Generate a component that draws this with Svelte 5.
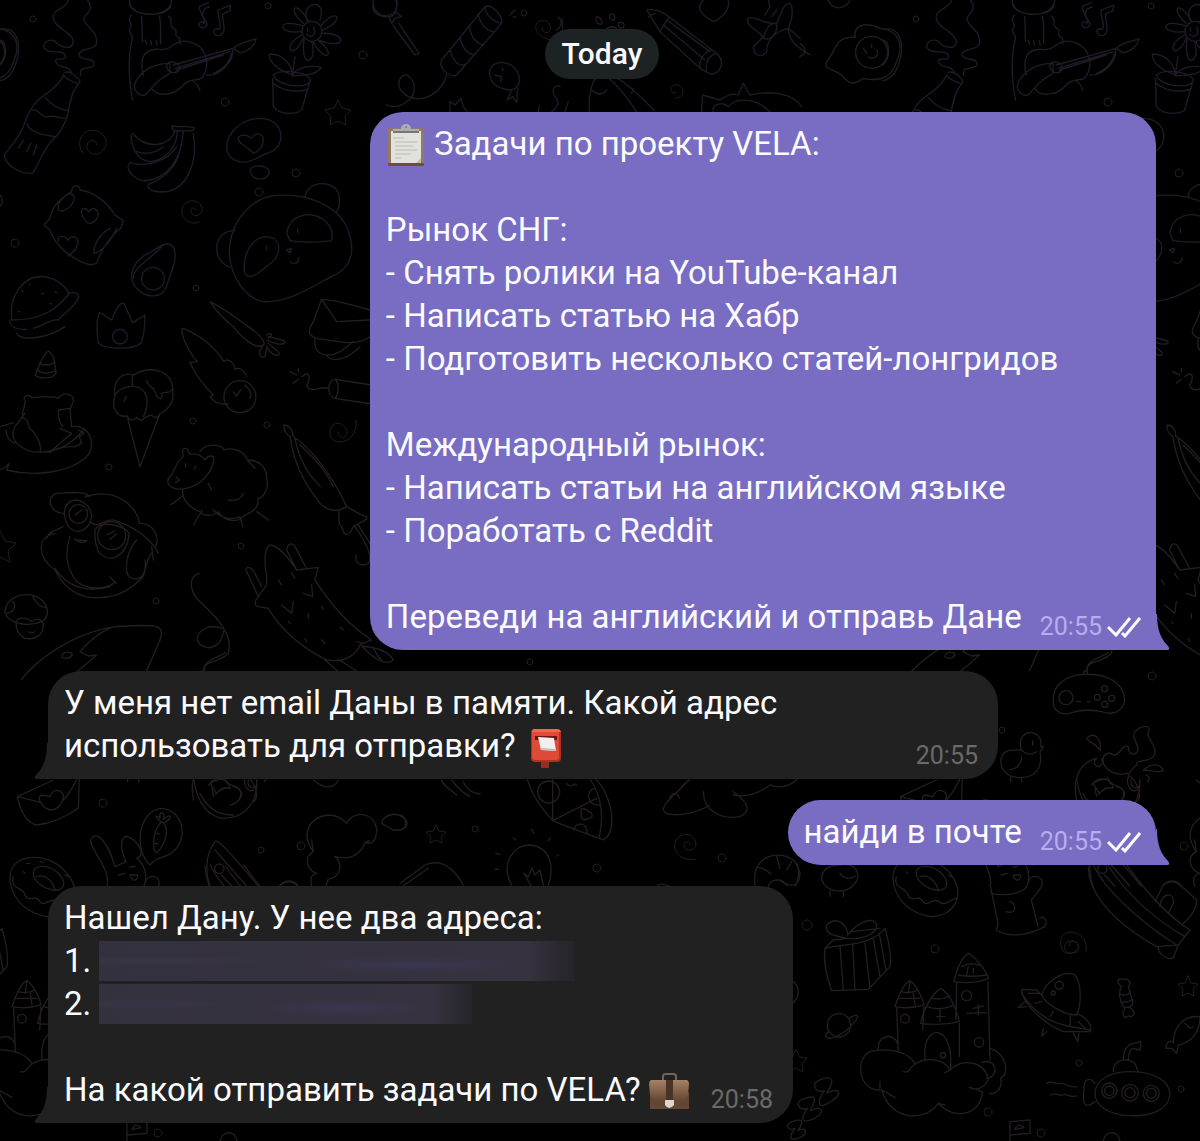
<script lang="ts">
	const tileWidth = 883;
	const tileOffsets = [-tileWidth, 0, tileWidth];

	// small circles scattered between the doodles: x, y, radius
	const dots = [
		[33, 19, 3], [268, 6, 3], [363, 55, 4], [225, 102, 4], [296, 173, 4], [259, 192, 4],
		[15, 243, 4], [196, 288, 3], [193, 421, 3], [267, 425, 3], [109, 467, 3], [241, 546, 3],
		[156, 601, 3], [269, 676, 4], [119, 730, 3], [103, 803, 4], [261, 850, 3], [301, 846, 4],
		[475, 829, 3], [597, 868, 4], [722, 858, 4], [807, 925, 5], [52, 949, 4], [196, 1063, 3],
		[298, 1089, 3], [105, 1112, 4], [158, 1133, 4], [524, 13, 3], [530, 662, 3]
	];

	const spirals = [
		'M83 153 C77 146 79 134 88 131 C100 127 111 140 104 149 C98 158 85 154 87 145 C89 138 97 140 97 145',
		'M199 222 C190 226 181 219 182 210 C183 200 195 198 201 205 C206 215 193 219 191 212 C190 207 195 207 196 210',
		'M340 442 C332 443 327 434 332 426 C337 420 347 425 347 433 C346 440 338 438 338 432 M356 420 C358 432 350 442 340 442',
		'M552 40 C539 38 533 29 537 23 C543 17 553 23 550 30 C547 36 540 31 543 27 M562 18 C565 30 560 38 552 40',
		'M675 98 C685 98 685 87 678 85 C669 84 669 94 676 93',
		'M695 859 C683 862 673 853 675 843 C678 831 694 832 696 843 C696 852 684 852 684 845 C684 840 690 842 690 844',
		'M192 952 C182 957 179 945 184 942 C195 937 201 951 191 953 M180 951 C174 940 180 932 188 932 C199 933 205 942 203 951 M180 951 C188 957 196 951 195 945 C192 939 185 940 187 946'
	];

	const stars = [
		[338, 114, 14], [0, 548, 17], [436, 835, 10], [796, 1062, 12], [305, 987, 11]
	];

	function starPoints(cx: number, cy: number, r: number) {
		const points: string[] = [];
		for (let i = 0; i < 10; i++) {
			const radius = i % 2 ? r / 2 : r;
			const angle = (i * Math.PI) / 5 - Math.PI / 2;
			points.push(`${Math.round(cx + radius * Math.cos(angle))},${Math.round(cy + radius * Math.sin(angle))}`);
		}
		return points.join(' ');
	}
</script>

{#snippet meta(time: string, sent: boolean)}
	<span class="meta">
		<time>{time}</time>
		{#if sent}
			<svg class="checks" viewBox="0 0 34 22" role="img" aria-label="Read">
				<path d="M1 11 L9 19 L23 2 M15 17 L18 20 L33 2" />
			</svg>
		{/if}
	</span>
{/snippet}

{#snippet tail()}
	<svg class="tail" viewBox="0 0 16 36" aria-hidden="true">
		<path d="M0 0 H1 C1 16 5 25 12 32 Q15 36 11 36 H0 Z" />
	</svg>
{/snippet}

<main class="chat">
	<svg class="wallpaper" aria-hidden="true">
		<defs>
			<g id="doodles">
				{#each dots as [x, y, r]}
					<circle cx={x} cy={y} {r} />
				{/each}
				{#each spirals as d}
					<path {d} />
				{/each}
				{#each stars as [x, y, r]}
					<polygon points={starPoints(x, y, r)} />
				{/each}

				<!-- bottle, guitar player, flower pot, bananas, pillow, panda, avocado -->
				<g class="violet" transform="scale(.3333)">
					<path d="M205 0 C205 25 155 25 160 55 C163 85 218 95 220 125 C218 155 175 140 165 123 C145 115 125 130 133 145 C145 165 195 145 197 170 C190 185 165 170 167 185 C175 210 205 190 215 220 M262 0 C290 35 245 45 252 60 C265 90 290 90 290 125 C290 155 240 140 236 165 C245 185 285 170 282 195 C275 210 235 195 242 225" />
					<path d="M195 218 C205 210 235 230 240 245 L228 262 C215 280 210 305 203 345 C190 385 175 405 160 418 C130 445 118 490 98 520 C60 522 20 500 12 465 C40 430 55 415 68 385 C82 345 95 315 125 292 C155 270 182 250 190 225 M190 225 C200 240 215 245 232 250 M135 292 C155 315 180 328 203 332 M98 330 C115 325 125 355 145 350 C165 345 180 355 195 355 M80 370 C90 400 130 405 165 410 M70 420 C62 435 58 440 55 445 M92 430 L80 455 M110 435 L100 465" />
					<path d="M388 0 C388 60 515 55 515 0 M388 12 C400 55 510 50 513 15 M395 45 C375 65 405 70 390 85 C380 100 405 100 395 125 C385 170 385 240 398 300 M425 50 C428 80 425 100 428 125 M478 48 C485 75 480 110 482 130 M505 48 C525 60 500 75 522 85 C540 95 515 105 535 112 C545 120 535 128 542 132 M435 120 L440 132 M452 122 L455 135 M468 122 L472 135" />
					<path d="M430 225 C418 180 430 145 475 148 C520 155 520 115 565 125 C620 135 630 190 612 225 C600 250 570 230 550 255 C520 290 470 290 455 265 M510 190 C470 190 430 205 410 240 C390 270 420 290 435 285 C455 270 460 245 510 220 Z M500 195 C510 175 540 190 538 205 C535 225 500 222 500 195 M520 195 L700 145 M525 205 L690 155 M530 210 L670 165 M700 145 C720 125 745 125 768 117 C765 135 745 155 720 158 Z M620 225 C655 230 700 190 698 150 M640 220 C670 210 690 185 695 160 M580 245 C590 245 595 260 600 272" />
					<path d="M600 80 C590 70 605 60 612 70 C620 55 590 30 600 18 L625 8 M600 80 C615 90 625 75 618 65 C605 45 605 40 612 28 L628 20 M648 105 C635 95 645 82 658 88 C668 75 650 45 655 30 L692 16 L690 32 L668 42 C665 60 680 85 668 100 C662 108 655 108 648 105" />
					<circle cx="936" cy="94" r="30" />
					<path d="M923 64 C895 5 985 -10 960 60 M965 75 C1010 20 1040 60 967 90 M967 100 C1040 95 1045 155 955 120 M955 122 C1010 160 980 195 940 128 M935 125 C955 190 900 210 912 120 M910 115 C880 185 840 140 905 105 M905 95 C830 105 830 50 908 78 M910 70 C865 35 880 -10 925 62 M923 84 V94 M942 80 V90 M920 102 C930 118 945 105 945 92" />
					<path d="M885 170 L877 225 M877 225 C875 190 845 160 808 163 C808 190 835 210 877 225 C895 200 930 195 964 202 C950 225 915 225 877 228 M820 225 C845 205 920 215 932 240 C925 270 830 260 820 225 M818 235 L820 320 C840 345 885 345 905 330 L928 250 M820 250 C850 275 900 280 925 265" />
					<path d="M515 378 C535 382 560 378 583 382 C585 400 540 390 520 392 Z M525 392 C510 440 440 450 400 402 C385 395 395 480 450 485 C500 480 530 440 532 395 M530 440 C500 490 430 500 390 488 C370 510 410 545 440 542 C500 535 545 480 550 395 M540 450 C530 510 480 540 445 553 C440 575 480 580 510 573 C565 555 595 480 580 400 M410 455 C440 465 465 460 490 440" />
					<path d="M690 470 C660 430 705 355 785 355 C850 360 860 430 815 455 C775 465 740 510 690 470 M760 460 C745 440 710 430 715 412 C730 400 742 405 755 415 C765 395 785 400 790 415 C792 440 775 455 760 460 M750 510 C760 490 810 495 808 520 C800 545 755 545 750 510" />
					<path d="M215 575 C215 555 240 550 240 570 C280 575 320 605 345 645 L370 662 L362 685 C335 705 305 745 290 790 L270 795 C220 780 165 740 150 690 L132 675 L150 655 C155 615 190 590 215 575 M175 615 C185 590 215 570 222 590 C222 620 190 640 175 630 Z M265 670 C245 655 235 625 255 625 L268 635 C275 615 300 630 293 650 C290 665 275 670 265 670 M175 725 C170 705 195 705 203 720 C220 700 240 715 232 735 C225 755 215 760 205 768 M330 685 C300 700 280 735 282 760 C310 755 340 710 350 685" />
					<path d="M805 590 C890 575 1000 600 1040 680 C1070 750 1055 800 1005 825 C950 850 870 910 790 905 C720 890 680 800 690 730 C700 660 750 605 805 590 M915 592 C920 540 1010 535 1018 590 C1020 615 1015 630 1008 638 M705 692 C640 690 630 780 690 802 M860 700 C870 640 930 635 965 655 C995 675 1000 700 995 722 C950 730 890 725 870 722 Z M735 780 C745 720 790 700 820 715 C850 735 835 775 805 795 C770 825 745 840 735 820 C730 805 732 795 735 780 M800 738 V750 M893 687 V699 M860 750 L875 745 L870 758 Z M870 785 C880 795 898 790 897 772" />
					<path d="M395 830 C395 790 430 765 455 755 C485 735 505 720 522 745 C535 780 510 820 500 860 C485 895 440 895 415 870 C400 855 395 845 395 830 M400 835 C400 800 450 780 490 735" />
					<circle cx="459" cy="836" r="34" />
					<path d="M35 960 C25 890 70 825 130 830 C180 835 210 875 205 885 C170 925 130 960 35 960 M205 885 C215 870 240 880 235 895 C215 930 190 940 175 960 C150 955 130 980 100 985 M28 960 C30 980 50 990 80 988 M90 850 V855 M65 870 L68 875 M125 880 L130 882 M150 910 L155 912 M55 935 H60 M165 875 L170 878" />
					<path d="M292 1000 C290 970 290 950 300 938 L335 960 C345 930 360 905 372 910 L398 968 L435 945 C435 980 430 1020 422 1030 C400 1050 320 1050 295 1030 Z" />
					<circle cx="360" cy="1010" r="22" />
					<path d="M0 88 C40 80 60 110 55 160 C45 220 20 240 0 242 M0 120 C20 125 25 170 0 195 M1118 20 C1120 50 1170 60 1185 40 C1195 25 1190 0 1185 -5 M0 585 C10 595 8 610 0 620" />
				</g>

				<!-- comet, ice cream, hippo, dog, sheep, umbrella, fox, mushroom, whale -->
				<g transform="translate(0 330) scale(.3333)">
					<path d="M105 135 C115 120 125 75 145 63 C165 75 165 110 168 130 C155 150 115 145 105 135 M118 100 C135 110 150 105 165 98 M110 120 C130 135 150 130 168 122 M50 10 C65 35 145 25 195 -10" />
					<path d="M75 250 L45 290 C25 330 60 355 95 365 C180 375 225 330 250 300 M75 250 C55 270 80 220 75 210 C65 200 85 190 95 203 C125 200 160 195 175 205 C185 185 225 190 220 215 L210 238 L215 290 C270 280 295 350 255 385 C200 430 100 440 20 420 L28 400 C15 415 0 420 -5 420 M175 240 C175 270 180 280 188 290 M175 240 L210 235 M65 262 C90 265 80 295 95 300 C115 320 125 350 120 365 M235 300 L252 310 L238 320 L245 340 L225 350 C200 350 165 355 148 368 L215 310 L180 295 M0 290 L40 278 M18 300 C20 325 30 335 45 340" />
					<path d="M345 200 C335 150 370 125 400 135 C450 105 515 120 518 175 C525 225 500 240 478 252 C475 265 460 265 455 255 L435 262 C430 275 415 270 410 262 C400 275 385 270 382 258 C345 265 335 225 345 200 M345 195 C365 165 425 155 440 200 C445 230 435 250 430 260 M400 135 C395 145 395 155 398 165 M440 152 C450 180 460 165 465 185 C475 215 490 210 485 190 C500 185 510 190 515 180 M372 215 L378 200 M383 265 L420 410 L478 255" />
					<circle cx="720" cy="200" r="48" />
					<path d="M740 140 C735 120 715 110 705 118 C700 90 680 85 672 95 C650 60 610 20 550 -5 C535 -5 560 60 592 95 L570 98 C590 140 610 165 640 195 L630 200 C640 215 660 225 685 222 M700 185 L710 198 L722 180 M735 165 C755 185 755 195 750 205 M630 -85 C650 -75 705 -40 745 -10 C775 10 800 35 790 45 C770 60 725 25 700 -10 C660 -40 640 -70 630 -85 M790 45 C770 70 780 85 795 80 L800 55 M800 50 C820 85 845 80 835 65 L805 40 M800 30 C850 55 870 35 845 30 L805 20 M800 15 C815 5 820 15 805 25" />
					<path d="M940 -25 L965 -92 C1010 -90 1060 -75 1110 -60 M965 -92 L1010 -25 L1110 -30 M940 -25 C925 0 920 15 950 25 C1010 35 1070 50 1110 20 M945 28 C940 60 960 75 980 75 C1010 80 1040 50 1060 35 M980 75 C995 100 1040 90 1080 50 M870 125 L890 135 M880 160 L895 148 M895 115 V125 M905 140 C935 115 930 155 920 165 C930 195 965 165 985 175 M1115 165 L1005 148 C980 150 980 200 1005 205 L1115 222 M1005 148 C1020 160 1015 195 1005 205" />
					<path d="M550 380 C545 360 550 350 562 358 L568 372 C590 370 605 375 615 390 C625 375 640 375 642 385 C635 440 590 475 540 478 C500 475 495 450 515 435 C525 415 535 385 550 380 M557 402 V410 M587 408 L583 418 M528 440 L538 450 L526 458 M600 365 C620 335 665 345 672 360 C700 350 735 365 742 390 C790 390 800 425 800 445 C810 480 785 505 775 505 C775 555 735 545 725 565 C700 580 670 570 655 545 C640 560 610 560 600 545 C570 535 545 510 548 478 M742 390 L765 415 M625 460 L635 480 M685 510 C710 515 725 505 730 490 M548 498 L513 524 M607 540 L580 585 M720 560 L728 590 M770 545 L806 570 M640 540 C670 570 700 570 720 560" />
					<path d="M852 285 C870 285 880 305 878 318 C920 345 990 420 1040 530 C1010 550 980 540 960 520 C905 450 880 390 870 320 C855 310 850 295 852 285 M885 325 C900 400 930 440 962 470 M900 345 C960 400 980 430 1000 470 M1040 530 C1060 540 1080 555 1100 560 C1105 580 1060 575 1055 600 C1045 620 1030 615 1028 595 C1015 585 1015 560 1018 540 M1065 590 C1100 640 1120 680 1105 700 C1080 715 1060 690 1070 675 M1075 585 L1110 640" />
					<path d="M190 550 C150 550 135 500 170 490 C215 488 250 482 270 500 M255 500 C350 470 410 530 418 580 M165 610 C110 620 110 680 165 720 C200 790 260 820 350 795 C390 780 410 760 425 745 C440 730 435 690 455 670 M410 630 C375 670 370 735 395 745 C430 755 440 720 435 690 M420 580 C470 580 480 635 465 650 M190 590 C170 600 150 600 140 625 M210 620 C190 680 205 720 230 755 C270 785 330 775 345 755 M165 715 C200 770 260 790 330 770 M330 740 L348 760 M210 515 C235 500 275 525 275 560 C265 615 215 615 200 580 C190 555 190 530 210 515 M270 575 C300 600 310 565 340 570 C400 590 450 620 475 670 M285 600 C300 570 370 585 388 610 C380 680 330 705 295 665 C285 640 283 620 285 600 M225 555 L245 540 M320 615 L345 603 M330 628 L350 612 M460 690 L455 650 M225 630 L260 632 C255 640 235 640 225 625" />
					<circle cx="235" cy="552" r="28" /><circle cx="335" cy="617" r="42" />
					<path d="M15 850 C15 800 70 785 110 800 C150 820 150 860 125 875 C90 890 30 885 15 850 M20 850 C50 845 45 820 38 815 M98 797 C105 820 125 835 140 832 M48 880 C50 860 80 860 95 875 C110 860 130 870 130 885 C130 920 100 930 75 925 C55 915 48 895 48 880 M85 905 C92 912 100 910 103 905" />
					<path d="M65 1048 C110 990 210 915 330 892 C400 885 440 885 470 890 C485 895 488 910 480 930 L440 1022 M240 965 C260 940 300 905 335 893 M240 965 L265 978 L290 975 C260 1000 235 1025 200 1048 M185 980 C190 960 215 965 217 975 C205 990 190 985 185 980 M598 730 C560 740 570 790 605 820 C660 870 700 920 685 970 C660 1000 610 990 612 1022 M665 895 C630 880 590 900 592 930 C600 960 660 970 672 900" />
					<path d="M800 735 C790 690 795 650 812 645 C840 650 870 690 890 720 L955 712 L945 750 C990 820 1050 890 1115 930 M805 835 C770 830 760 830 768 810 L800 765 M890 720 L860 660 C865 635 880 640 885 650 L918 712 M775 800 L738 720 C740 705 755 715 762 725 L785 770 M800 735 V765 M805 835 C850 910 920 960 980 990 C1040 1000 1070 970 1080 945 L1115 930 M845 825 L875 850 L880 815 M910 790 L938 800 L935 765 M835 750 L845 765 M875 730 L885 745 M925 850 V865 M865 875 L870 880 M965 830 L970 838 M915 925 L920 935 M965 930 L975 940 M1020 890 L1030 900 M1070 935 L1090 940 M1085 948 C1110 950 1160 955 1180 990 C1160 1010 1120 985 1085 948 M1120 955 C1130 965 1125 975 1145 990 M975 990 L1020 1030 M1015 988 L1080 1030" />
				</g>

				<!-- lollipop, firework, fish, rocket, pencil, plane, cat -->
				<g class="violet" transform="translate(370) scale(.3333)">
					<path d="M10 0 C5 45 50 60 75 35 C85 15 80 0 80 -5 M55 45 L65 70 L75 55 L95 50 L80 38 M68 75 L135 165 L147 160 L85 68 M215 180 L345 20 C365 10 400 50 395 70 L260 225 C240 235 205 205 215 180 M345 20 C345 45 370 65 395 70 M325 40 C330 75 350 90 370 95 M298 75 C300 110 320 130 340 135 M270 110 C275 145 295 160 310 165 M240 145 C245 180 265 200 285 195 M230 225 C215 280 160 310 115 290 C75 270 80 225 110 225 C140 240 140 290 110 305 C85 325 60 320 50 315" />
					<path d="M370 250 C350 220 355 190 395 187 C440 190 455 230 445 255 C435 275 400 275 370 250 M375 225 L395 230 L392 245 M398 205 V212 M425 270 L412 300 L428 290 L440 308 C445 295 435 275 445 265 M240 335 L240 305 L255 315 L272 295 L280 320 L292 335 M420 45 L435 30 M430 50 L438 52 M565 50 C580 65 575 80 560 90 M680 50 C685 45 700 65 695 72 C680 75 675 60 680 50 M720 45 C730 35 740 50 730 62 C720 60 718 50 720 45 M745 70 C760 60 770 80 755 85 C745 85 745 75 745 70 M668 90 C675 82 688 100 680 105 C670 105 665 95 668 90 M685 140 C685 120 700 110 705 90 C730 70 745 85 745 100 L755 130 C745 140 720 135 685 140" />
					<path d="M658 335 C655 270 670 225 700 222 C750 225 790 270 852 330 M700 222 C740 250 770 290 800 335 M665 270 C680 285 700 285 710 270 M785 280 L790 265 M545 335 C565 320 570 305 555 290 C545 270 550 255 570 258 M585 335 L595 305 M505 335 L508 318" />
					<path d="M830 30 C850 25 880 35 897 50 L1045 165 C1065 190 1050 225 1020 222 L990 205 L870 95 Z M835 50 L855 40 M870 95 L897 50 M880 75 L1005 180 M890 60 L1020 155 M1020 150 C1000 160 985 185 990 205 M1035 160 C1015 170 1005 190 1010 215 M1000 0 C980 20 985 40 1030 65 C1065 50 1080 25 1075 0 M995 335 L998 285 L1050 300 M1050 300 C1080 280 1090 280 1105 285 L1120 250 L1140 285 C1200 270 1270 280 1295 320 M1030 335 C1025 310 1060 305 1075 320 C1100 290 1160 295 1200 335" />
					<path d="M1135 55 C1160 45 1175 75 1220 70 C1240 30 1240 10 1260 10 C1275 30 1265 60 1255 85 L1290 115 M1255 85 C1215 95 1190 120 1190 155 C1170 180 1150 160 1150 140 L1180 110 C1155 85 1125 75 1135 55 M1180 115 C1190 85 1195 70 1220 70 C1225 95 1205 125 1180 115 M1255 90 C1260 130 1290 145 1320 165 M1185 45 L1200 20 L1195 0 M1205 50 L1220 30 M1375 0 C1390 40 1440 20 1440 -5" />
				</g>
				<g transform="translate(800) scale(.3333)">
					<path d="M165 112 C160 65 210 70 240 85 C290 90 315 125 290 185 C270 250 215 240 190 235 C165 255 145 255 125 225 C100 205 70 210 80 185 C105 160 105 105 165 112 M190 145 L200 160 M215 135 V142 M205 170 C225 185 240 160 230 150 M0 130 C20 145 20 160 0 170" />
					<circle cx="215" cy="157" r="48" />
				</g>

				<!-- gamepad, chick, fish bowl -->
				<g transform="translate(117 580) scale(.3333)">
					<path d="M160 365 C155 310 205 285 250 283 C310 280 370 300 374 360 C370 400 330 405 305 395 C270 388 240 390 215 398 C180 410 160 390 160 365 M250 283 C250 270 260 270 262 280 C250 240 310 230 325 218 M230 365 H242 M262 365 H270" />
					<circle cx="198" cy="353" r="21" /><circle cx="314" cy="326" r="9" /><circle cx="292" cy="352" r="9" /><circle cx="335" cy="355" r="9" /><circle cx="314" cy="373" r="9" />
					<path d="M65 510 C50 470 80 455 95 458 C125 465 125 490 122 500 L130 500 L120 515 C130 570 100 590 70 592 C10 600 -5 550 5 530 C15 505 45 510 65 510 C75 525 100 525 110 515 M98 483 V495 M30 568 C50 570 65 550 65 530 M32 590 V605 M65 592 V605 M260 475 C285 450 305 480 300 512 C290 490 275 495 260 475 M230 660 C215 590 245 545 290 535 M310 545 C305 520 330 515 340 525 C365 525 365 490 385 500 C385 525 405 530 415 510 C410 480 390 465 410 450 C430 435 455 435 445 455 C435 475 480 500 460 530 C440 550 410 535 410 555 C390 570 390 585 385 580 C340 590 310 565 305 535 M290 535 C270 555 300 570 305 550 M385 585 C410 600 430 650 410 665 M275 615 C285 600 310 600 325 595 L330 610 C370 620 385 640 365 660 M285 625 L290 650 M385 590 C375 620 400 640 410 630 M430 570 C460 545 485 555 490 572 C470 580 450 570 430 570 M438 585 C450 590 450 600 442 605" />
				</g>

				<!-- letter, donut, rabbit, boat, cloud -->
				<g transform="translate(0 780) scale(.3333)">
					<path d="M52 50 L160 0 M52 50 C60 90 80 130 110 135 C160 130 200 110 235 85 L238 -10 M52 50 L125 68 M190 60 C210 40 230 0 235 -15 M150 90 C120 80 110 50 125 45 L150 50 C160 20 195 30 190 55 C185 75 170 90 150 90 M582 0 C590 60 620 110 670 115 C740 115 775 60 770 0 M600 40 C630 100 670 105 700 105 M630 10 C650 -15 690 0 690 25 C660 15 640 55 650 40 Z M700 20 C740 25 720 75 690 75 M745 0 C740 25 765 30 770 15" />
					<path d="M30 300 C25 245 75 225 130 235 C190 250 225 300 225 340 C220 400 160 420 120 405 C70 390 35 350 30 300 M100 280 C100 250 150 255 175 280 C205 310 190 335 160 330 C125 325 100 300 100 280 M110 290 C135 280 160 305 165 330 M40 290 C30 330 70 320 75 345 C85 370 105 340 120 365 C135 385 150 345 175 370 C200 375 200 355 222 355 M80 250 H90 M120 245 L130 248 M70 275 L75 280 M195 285 L205 290" />
					<path d="M322 318 C330 260 270 210 272 180 C290 145 325 190 345 260 L378 245 C355 195 365 165 385 170 C415 185 440 225 410 235 C435 255 440 285 435 310 C430 340 370 350 325 340 M435 310 C440 280 480 285 478 310 C475 330 455 345 445 360 L465 440 M322 318 L345 430 L340 450 C380 475 440 465 485 440 C495 425 485 405 470 415 M355 285 L375 280 M390 262 L405 258 M390 285 C400 310 415 300 412 285 Z M380 365 C400 370 405 405 370 395 M450 255 C400 210 415 90 485 85 C555 90 570 190 505 225 C480 235 465 235 450 255 M465 215 C455 180 465 145 485 125 C510 140 500 190 470 218 Z M485 125 C465 115 465 100 480 115 C475 90 500 95 490 118 C515 95 520 115 490 130 M470 160 L480 163 M465 190 L475 192" />
					<path d="M645 185 C655 175 700 230 775 318 M645 185 C610 230 620 290 630 320 M645 210 L740 318 M665 285 L695 318 M840 315 C870 290 890 310 895 320" />
					<circle cx="658" cy="266" r="14" />
					<path d="M940 215 C900 160 930 110 985 105 C1015 105 1030 120 1040 130 C1060 90 1120 95 1130 145 C1130 180 1120 195 1095 188 C1110 180 1115 180 1095 188 C1080 225 1050 240 1005 230 C1025 240 1030 290 985 298 C980 310 975 320 980 330 M940 215 L935 180 M940 215 C910 230 920 270 950 280 C930 285 930 300 935 318 M1145 130 C1150 105 1185 95 1205 110 C1240 130 1215 155 1180 150 Z M940 0 C970 25 1000 30 1015 0" />
				</g>

				<!-- gift, planet, castle in the clouds, ufo, sweets, fish, submarine -->
				<g transform="translate(-103 860) scale(.3333)">
					<path d="M345 440 C355 410 370 370 390 362 C410 375 430 420 432 435 C400 445 370 445 345 440 M355 415 H420 M365 395 C380 400 400 398 412 390 M390 362 L385 400 M400 400 L405 435 M350 442 L355 575 M432 440 L428 510 M422 490 C430 450 455 400 482 385 C510 400 530 450 538 485 C500 495 460 495 422 490 M440 440 C470 450 500 445 520 435 M455 415 C475 420 495 415 510 408 M480 445 V485 M470 470 H495 M538 490 V590 M522 365 C530 330 545 290 567 280 C595 300 620 335 626 355 C590 370 555 370 522 365 M545 320 C560 310 580 310 600 315 M535 345 C560 350 590 350 620 345 M565 320 L560 345 M580 325 V340 M530 370 L528 480 M624 365 L630 600 M560 460 L620 458 M595 435 V465 M580 445 L610 438 M435 598 C425 490 515 490 512 605 V625" />
					<circle cx="375" cy="476" r="13" /><circle cx="560" cy="407" r="15" /><circle cx="597" cy="547" r="14" /><circle cx="489" cy="586" r="8" />
					<path d="M300 690 C240 695 220 600 270 575 C330 560 390 580 405 612 C440 590 490 595 510 630 C540 595 610 600 625 655 C620 680 590 695 568 682 C600 690 600 695 608 695 C600 770 520 780 475 730 C430 790 330 780 305 690 L345 712 M300 690 V665 M370 635 C390 640 385 625 405 612 M495 638 L510 630 M295 572 C290 520 345 520 352 550 M605 608 C650 590 660 650 620 655 M630 565 C680 580 690 640 662 655 C670 690 640 705 630 700 M475 730 L495 735" />
					<path d="M135 265 C190 250 270 260 315 205 C325 240 335 290 330 320 L265 388 L155 392 C140 350 130 300 135 265 M135 265 L160 240 L200 235 M180 258 L190 390 M218 255 L225 390 M255 250 L270 385 M280 238 L300 350 M298 222 L318 330 M200 235 C160 225 135 225 140 195 C165 170 200 185 203 225 C230 190 280 165 290 195 C290 225 240 240 203 235 M215 215 L300 205" />
					<circle cx="177" cy="496" r="35" />
					<path d="M208 475 C235 455 240 470 220 490 C195 520 150 545 138 530 C135 520 142 518 147 514" />
					<path d="M785 405 C800 360 850 330 885 345 C905 370 905 430 890 465 C850 465 795 430 785 405 M785 405 L770 390 L725 388 C725 430 790 490 850 515 L930 515 C940 500 920 470 890 460 M725 400 C790 500 870 500 930 510 M745 400 H780 M765 430 L785 425 M810 470 L820 455 M870 500 L872 465 M895 485 L915 505 M735 425 L715 442 L740 440 M790 505 L785 528 L800 515 M880 520 L893 545 L897 520" />
					<circle cx="838" cy="376" r="12" /><circle cx="820" cy="399" r="6" />
					<path d="M1025 380 C1000 360 1025 350 1030 360 C1045 350 1055 370 1045 380 L1058 425 C1060 440 1045 445 1030 440 C1018 420 1015 395 1025 380 M1018 400 C1035 410 1045 405 1052 395 M1022 425 C1040 430 1050 425 1058 418 M1035 445 C1020 475 1040 475 1045 468 C1065 475 1070 455 1048 442 M1180 550 C1180 500 1210 465 1260 470 C1260 520 1230 550 1195 555 L1190 580 L1175 565 L1158 565 C1158 550 1165 542 1180 545 M1215 490 C1225 500 1230 510 1240 500" />
					<path d="M945 700 C945 655 1000 632 1060 635 C1130 638 1170 665 1170 705 C1165 750 1110 770 1050 767 C990 765 945 740 945 700 M945 670 C930 650 910 655 912 690 C905 740 920 745 945 725 M1000 635 C1000 600 1035 590 1065 610 L1075 635 M1030 600 C1030 570 1040 555 1060 550 L1083 545 L1080 570 L1058 565 C1045 575 1045 590 1045 600 M800 670 C820 660 825 675 840 670 C855 665 860 685 890 680 M812 705 C830 695 835 710 850 705 C860 700 870 715 890 708" />
					<circle cx="988" cy="692" r="23" /><circle cx="988" cy="692" r="14" /><circle cx="1050" cy="698" r="25" /><circle cx="1050" cy="698" r="15" /><circle cx="1114" cy="700" r="24" /><circle cx="1114" cy="700" r="15" />
					<path d="M690 785 L750 780 V820 L692 825 M690 785 V843 M705 808 C710 795 720 790 732 803 Z M970 843 C975 810 1015 810 1020 843 M925 20 C925 80 970 170 1130 260 L1195 255 L1230 210 C1150 160 1080 70 1040 15 M940 15 C970 80 1070 180 1190 255 M985 18 C1040 100 1110 170 1215 230 M1135 260 C1135 290 1170 300 1180 293 L1195 255 M1125 125 L1150 75 C1170 60 1190 65 1200 75 L1250 120 C1250 150 1225 180 1210 190 M1140 140 C1140 100 1185 90 1180 130 L1165 160" />
				</g>

				<!-- sleeping Zs, sheep -->
				<g transform="translate(780 860) scale(.3333)">
					<path d="M104 678 C100 665 135 650 150 655 C162 662 150 685 140 699 C150 695 172 685 176 698 C175 715 140 735 125 737 C108 732 125 705 133 692 C120 698 106 692 104 678 M55 735 C50 722 85 708 100 712 C110 720 98 740 90 753 C105 745 125 740 124 755 C120 772 85 785 74 783 C60 778 75 755 83 745 C70 750 58 745 55 735 M22 800 C20 785 55 778 63 782 C70 790 60 803 54 812 C65 805 78 805 76 818 C70 832 45 840 36 837 C26 832 38 815 44 806 C35 810 25 808 22 800" />
					<path d="M125 50 C130 25 150 15 180 15 C220 10 235 25 233 55 C220 90 190 95 165 92 C140 85 125 70 125 50 M180 40 C190 55 210 60 225 48 M150 92 V108 M190 92 V110 M0 60 C30 85 60 80 60 40 L50 10 M40 365 C60 380 60 410 38 430" />
				</g>

				<!-- pizza, light bulb, seal, shrimp -->
				<g transform="translate(400 770) scale(.3333)">
					<path d="M380 20 C395 80 430 120 458 152 C510 175 560 190 610 210 C660 180 630 60 580 20 M565 20 C610 80 610 150 598 200 M458 152 V20 M458 152 L590 85 M600 105 C560 110 555 60 585 55 M520 180 C530 155 560 155 562 190 M500 40 C515 60 520 35 530 45 M545 130 C535 110 560 115 565 125 C580 125 580 145 565 145 C550 155 540 145 545 130" />
					<circle cx="446" cy="66" r="33" />
					<path d="M335 345 C300 280 340 225 390 225 C450 230 465 290 445 345 M370 310 L385 320 L395 295 L405 315 L420 300 M375 315 L395 350 M420 300 L430 345 M395 178 L402 190 M340 203 L348 210 M450 203 L445 213 M287 250 L300 253 M284 298 H296 M470 258 L476 255 M0 340 L75 285 C110 270 150 275 190 345 M0 355 L85 295" />
					<path d="M790 120 C790 95 840 65 865 30 M790 120 C800 145 880 135 930 105 M910 65 C910 120 960 150 1020 140 C1060 120 1040 95 1000 65 M1000 75 C1050 85 1090 60 1110 45 C1150 60 1180 40 1195 25 M808 90 C810 70 830 60 838 85 M840 60 C845 45 860 35 870 30 M1065 345 C1055 270 1110 250 1150 257 C1190 265 1210 300 1185 350 M1105 350 C1110 330 1140 320 1160 345 M1075 292 C1095 295 1105 305 1112 312 M1130 258 L1140 295 M1175 275 L1160 300 M770 350 C780 335 800 345 810 350 M125 30 C130 50 155 60 170 75 M155 30 C170 50 190 70 210 80 M190 35 C200 60 220 70 240 72 M0 135 C20 140 25 175 0 180" />
				</g>
			</g>
		</defs>
		{#each tileOffsets as x}
			<use href="#doodles" {x} />
		{/each}
	</svg>

	<div class="date">Today</div>

	<article class="bubble out">
		<p>
			<svg class="emoji" viewBox="0 0 40 44" role="img" aria-label="Clipboard">
				<rect x="2" y="5" width="36" height="38" rx="2" fill="#94795f" />
				<rect x="2" y="40" width="36" height="3" rx="1" fill="#69503d" />
				<rect x="5" y="8" width="30" height="32" fill="#e2e2dc" />
				<path d="M30 40 L35 35 V40 Z" fill="#bbb9ae" />
				<path d="M7 15 H18 M9 19 H31 M9 23 H27 M9 27 H31 M9 31 H25 M9 35 H15" stroke="#b9b9ba" />
				<path d="M7 6 H15 C15 3 17 1 20 1 S25 3 25 6 H33 V10 H7 Z" fill="#aaadb5" />
				<path d="M7 9 H33" stroke="#74777e" stroke-width="2" />
				<circle cx="20" cy="4" r="1" fill="#786dc4" />
			</svg>
			Задачи по проекту VELA:
		</p>
		<br />
		<p>Рынок СНГ:</p>
		<p>- Снять ролики на YouTube-канал</p>
		<p>- Написать статью на Хабр</p>
		<p>- Подготовить несколько статей-лонгридов</p>
		<br />
		<p>Международный рынок:</p>
		<p>- Написать статьи на английском языке</p>
		<p>- Поработать с Reddit</p>
		<br />
		<p>Переведи на английский и отправь Дане {@render meta('20:55', true)}</p>
		{@render tail()}
	</article>

	<article class="bubble in">
		<p>
			У меня нет email Даны в памяти. Какой адрес использовать для отправки?
			<svg class="emoji" viewBox="0 0 40 44" role="img" aria-label="Postbox">
				<path d="M17 34 H25 V43 H17 Z" fill="#9d2820" />
				<rect x="7" y="4" width="30" height="33" rx="4" fill="#b52d23" />
				<rect x="8" y="4" width="27" height="31" rx="3" fill="#df4937" />
				<path d="M8 7 Q8 4 11 4 H33 Q36 4 37 7 Z" fill="#f06750" />
				<path d="M11 11 H33 V15 H11 Z" fill="#70150f" />
				<path d="M14 12 L30 13 L32 26 L17 25 Z" fill="#f4eeee" />
				<path d="M16 23 L31 24 L32 26 L17 25 Z" fill="#c6b8b9" />
			</svg>
			{@render meta('20:55', false)}
		</p>
		{@render tail()}
	</article>

	<article class="bubble out">
		<p>найди в почте {@render meta('20:55', true)}</p>
		{@render tail()}
	</article>

	<article class="bubble in">
		<p>Нашел Дану. У нее два адреса:</p>
		<ol>
			<li>1. <span class="hidden-address"></span></li>
			<li>2. <span class="hidden-address short"></span></li>
		</ol>
		<br />
		<p>
			На какой отправить задачи по VELA?
			<svg class="emoji" viewBox="0 0 40 44" role="img" aria-label="Briefcase">
				<defs>
					<linearGradient id="leather" x1="0" y1="0" x2="0" y2="1">
						<stop offset="0" stop-color="#a48266" />
						<stop offset="1" stop-color="#65452f" />
					</linearGradient>
				</defs>
				<path d="M14 11 V7 Q14 5 17 5 H24 Q27 5 27 7 V11" fill="none" stroke="#6c6660" stroke-width="2" />
				<rect x="1" y="23" width="39" height="17" rx="1" fill="#634633" />
				<path d="M2 11 H38 Q40 12 40 15 L39 26 Q37 31 31 32 H9 Q3 31 1 26 L0 15 Q0 12 2 11 Z" fill="url(#leather)" />
				<path d="M17 11 H24 V32 H17 Z" fill="#493327" />
				<path d="M16 31 H25 V36 Q20 42 16 36 Z" fill="#ded6cc" />
			</svg>
			{@render meta('20:58', false)}
		</p>
		{@render tail()}
	</article>
</main>

<style>
	:global(body) {
		margin: 0;
		background: #000;
	}

	.chat {
		position: relative;
		display: flex;
		flex-direction: column;
		gap: 21px;
		box-sizing: border-box;
		min-height: 100vh;
		padding: 29px 44px 18px 48px;
		overflow: hidden;
		color: #fafaff;
		font-family: Roboto, 'Noto Sans', sans-serif;
		font-size: 33px;
		line-height: 43px;
	}

	.wallpaper {
		position: absolute;
		inset: 0;
		width: 100%;
		height: 100%;
		fill: none;
		stroke: #241d23;
		stroke-width: 1px;
		stroke-linecap: round;
		stroke-linejoin: round;
	}

	.wallpaper g[transform] {
		stroke-width: 4px;
	}

	.wallpaper .violet {
		stroke: #211a28;
	}

	.date {
		position: relative;
		align-self: center;
		margin-bottom: 12px;
		padding: 0 17px;
		border-radius: 25px;
		background: #1d2224;
		font-size: 30px;
		font-weight: 500;
		line-height: 50px;
	}

	.bubble {
		position: relative;
		box-sizing: border-box;
		max-width: 950px;
		padding: 10px 16px 12px;
		border-radius: 33px;
	}

	.out {
		align-self: flex-end;
		padding-right: 15px;
		border-bottom-right-radius: 0;
		background: #786dc2;
	}

	.in {
		align-self: flex-start;
		padding-right: 20px;
		border-bottom-left-radius: 0;
		background: #212121;
	}

	p,
	ol {
		margin: 0;
		padding: 0;
		list-style: none;
	}

	.tail {
		position: absolute;
		bottom: 0;
		left: 100%;
		width: 16px;
		height: 36px;
		fill: #786dc2;
	}

	.in .tail {
		right: 100%;
		left: auto;
		fill: #212121;
		transform: scaleX(-1);
	}

	.emoji {
		width: 40px;
		height: 44px;
		margin: -6px 0;
		vertical-align: -6px;
	}

	/* sits lower than the text beside it, without making the line taller */
	.meta {
		display: flex;
		float: right;
		align-items: center;
		gap: 5px;
		box-sizing: border-box;
		height: 43px;
		margin-left: 22px;
		padding-top: 20px;
		color: #6a6a6a;
		font-size: 25px;
	}

	.out .meta {
		margin-left: 18px;
		color: #b9acf0;
	}

	.checks {
		width: 34px;
		height: 22px;
		fill: none;
		stroke: #fafaff;
		stroke-width: 3px;
	}

	li {
		display: flex;
		align-items: center;
		gap: 8px;
	}

	.hidden-address {
		width: 476px;
		height: 40px;
		background:
			radial-gradient(ellipse at 12% 50%, #3a3549, transparent 20%),
			radial-gradient(ellipse at 66% 60%, #3b3652, transparent 25%),
			linear-gradient(90deg, #34313e, #36323f 90%, #252429);
	}

	.hidden-address.short {
		width: 373px;
	}
</style>
